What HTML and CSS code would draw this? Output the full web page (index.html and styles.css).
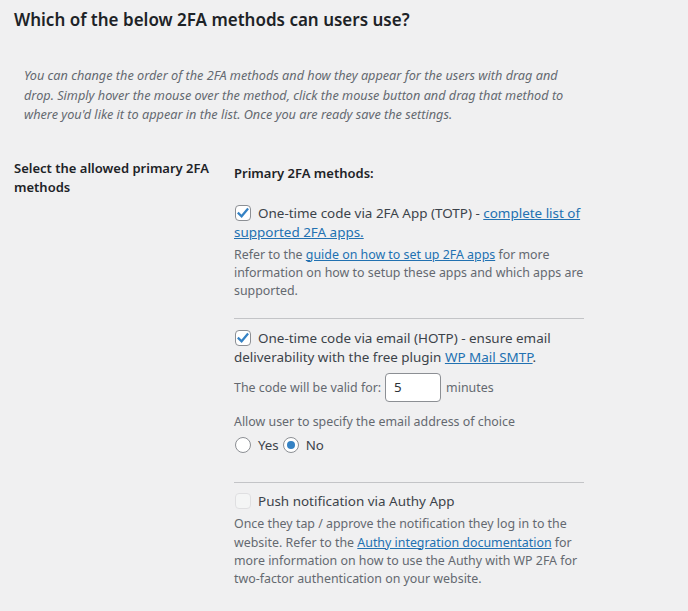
FILE: index.html
```html
<!DOCTYPE html>
<html>
<head>
<meta charset="utf-8">
<link rel="stylesheet" href="styles.css">
</head>
<body>
<div class="page">
  <h2 class="title">Which of the below 2FA methods can users use?</h2>
  <p class="intro">You can change the order of the 2FA methods and how they appear for the users with drag and drop. Simply hover the mouse over the method, click the mouse button and drag that method to where you'd like it to appear in the list. Once you are ready save the settings.</p>
  <div class="row">
    <div class="th">Select the allowed primary 2FA methods</div>
    <div class="td">
      <div class="subhead">Primary 2FA methods:</div>

      <div class="method first">
        <div class="check-line">
          <span class="cb checked"><svg viewBox="0 0 16 16" width="16" height="16"><path d="M3.6 8.4 L6.6 11.3 L12.4 4.3" fill="none" stroke="#3582c4" stroke-width="2.2" stroke-linecap="square"/></svg></span>One-time code via 2FA App (TOTP) - <a href="#">complete list of supported 2FA apps.</a>
        </div>
        <p class="desc">Refer to the <a href="#">guide on how to set up 2FA apps</a> for more information on how to setup these apps and which apps are supported.</p>
      </div>

      <div class="method">
        <div class="check-line">
          <span class="cb checked"><svg viewBox="0 0 16 16" width="16" height="16"><path d="M3.6 8.4 L6.6 11.3 L12.4 4.3" fill="none" stroke="#3582c4" stroke-width="2.2" stroke-linecap="square"/></svg></span>One-time code via email (HOTP) - ensure email deliverability with the free plugin <a href="#">WP Mail SMTP</a>.
        </div>
        <div class="valid">
          <span>The code will be valid for:</span>
          <span class="num">5</span>
          <span class="unit">minutes</span>
        </div>
        <div class="allow">Allow user to specify the email address of choice</div>
        <div class="radios">
          <span class="radio"></span><span class="rlabel">Yes</span><span class="radio on"></span><span class="rlabel">No</span>
        </div>
      </div>

      <div class="method last">
        <div class="check-line disabled">
          <span class="cb off"></span>Push notification via Authy App
        </div>
        <p class="desc tight">Once they tap / approve the notification they log in to the website. Refer to the <a href="#">Authy integration documentation</a> for more information on how to use the Authy with WP 2FA for two-factor authentication on your website.</p>
      </div>
    </div>
  </div>
</div>
</body>
</html>
```

FILE: styles.css
```css
* { box-sizing: border-box; }
html, body {
  margin: 0;
  background: #f0f0f1;
}
body {
  font-family: "Noto Sans", "Open Sans", sans-serif;
  font-size: 13px;
  color: #3c434a;
}
.page {
  padding: 8px 0 0 14px;
}
.title {
  margin: 0;
  font-size: 17px;
  line-height: 24px;
  font-weight: 600;
  color: #1d2327;
}
.intro {
  margin: 34px 0 0 10px;
  width: 545px;
  font-style: italic;
  font-size: 12.7px;
  line-height: 19.5px;
  color: #646970;
}
.row {
  display: flex;
  margin-top: 24px;
}
.th {
  width: 220px;
  padding: 10px 20px 0 0;
  font-weight: 600;
  line-height: 19px;
  color: #1d2327;
}
.td {
  width: 350px;
  padding-top: 15px;
}
.subhead {
  font-weight: 600;
  line-height: 19px;
  color: #1d2327;
}
a { color: #2271b1; text-decoration: underline; }
.method {
  padding: 10px 0 18px;
  border-bottom: 1px solid #c3c4c7;
}
.method.first { padding-top: 21px; }
.method.last { border-bottom: none; padding-top: 9px; }
.check-line {
  line-height: 19px;
  font-size: 13.45px;
}
.cb {
  display: inline-block;
  width: 16px;
  height: 16px;
  margin: 0 7px 0 1px;
  vertical-align: -3px;
  border: 1px solid #8c8f94;
  border-radius: 4px;
  background: #fff;
  position: relative;
}
.cb svg { position: absolute; left: -1px; top: -1px; }
.cb.off {
  border-color: #dcdcde;
  background: #f6f7f7;
  opacity: 0.8;
}
.desc {
  margin: 4px 0 0;
  line-height: 18.3px;
  font-size: 12.4px;
  color: #646970;
}
.desc.tight { margin-top: 4px; }
.valid {
  display: flex;
  align-items: center;
  margin-top: 6px;
  font-size: 12.4px;
  color: #646970;
}
.num {
  width: 56px;
  height: 29px;
  margin: 0 5px 0 4px;
  padding: 0 8px;
  border: 1px solid #8c8f94;
  border-radius: 4px;
  background: #fff;
  color: #2c3338;
  font-size: 13.3px;
  line-height: 27px;
}
.allow {
  margin-top: 10px;
  line-height: 19px;
  font-size: 12.4px;
  color: #646970;
}
.radios {
  display: flex;
  align-items: center;
  margin-top: 4px;
  height: 19px;
  font-size: 13.3px;
  margin-bottom: 10px;
}
.radio {
  width: 16px;
  height: 16px;
  margin-left: 1px;
  border: 1px solid #8c8f94;
  border-radius: 50%;
  background: #fff;
  display: flex;
  align-items: center;
  justify-content: center;
}
.radio.on::after {
  content: "";
  width: 8px;
  height: 8px;
  border-radius: 50%;
  background: #3582c4;
}
.rlabel { margin-left: 7px; margin-right: 3px; }
```
